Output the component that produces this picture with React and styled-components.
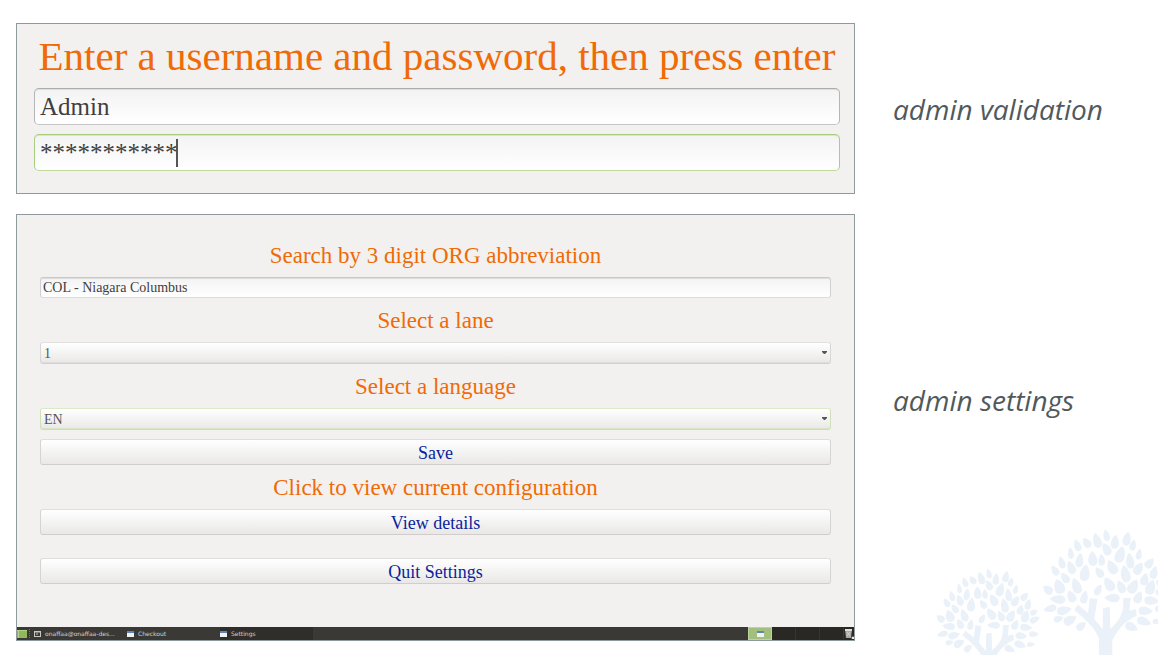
import React from "react";
import styled, { createGlobalStyle, css } from "styled-components";

const GlobalStyle = createGlobalStyle`
  *, *::before, *::after { box-sizing: border-box; }
  body { margin: 0; background: #ffffff; }
`;

const serif = '"Liberation Serif", "Times New Roman", serif';

const Page = styled.main`
  position: relative;
  min-height: 100vh;
  padding: 23px 0 14px 16px;
  display: flex;
  flex-direction: column;
  gap: 20px;
  overflow: hidden;
  font-family: ${serif};
`;

const Example = styled.section`
  display: grid;
  grid-template-columns: minmax(0, 839fr) minmax(0, 265fr);
  column-gap: 38px;
  align-items: center;
`;

const Caption = styled.h2`
  margin: 0;
  padding-bottom: ${(p) => (p.$raised ? 56 : 0)}px;
  position: relative;
  z-index: 1;
  font: italic 400 28px/36px "Open Sans", "Noto Sans", sans-serif;
  color: #50595b;
  white-space: nowrap;
`;

const Panel = styled.form`
  border: 1px solid #8f9a9c;
  background: #f2f1f0;
`;

const LoginBody = styled.div`
  display: flex;
  flex-direction: column;
  gap: 9px;
  padding: 0 14px 22px 17px;
`;

const Title = styled.h1`
  margin: 0 0 -9px;
  font-size: 41px;
  font-weight: 400;
  line-height: 64px;
  text-align: center;
  white-space: nowrap;
  color: #f06a05;
`;

const control = css`
  display: block;
  width: 100%;
  margin: 0;
  border: 1px solid;
  border-radius: 3px;
  outline: none;
  font-family: ${serif};
  color: #3f3f3f;
`;

const TextBox = styled.input`
  ${control}
  height: ${(p) => (p.$large ? 37 : 21)}px;
  padding: ${(p) => (p.$large ? "1px 5px 0" : "0 2px")};
  border-radius: ${(p) => (p.$large ? 5 : 3)}px;
  border-color: ${(p) =>
    p.$active
      ? "#a9cc7c #aace80 #bedb9a"
      : p.$large
        ? "#adadad #b5b5b5 #c6c6c6"
        : "#c9c8c7 #d2d1d0 #dddcdb"};
  box-shadow: inset 0 1px 0 ${(p) => (p.$active ? "#d7e8c2" : "#dededd")};
  background: linear-gradient(#f3f3f3, #ffffff);
  font-size: ${(p) => (p.$large ? 25 : 14)}px;
`;

const Field = styled.div`
  position: relative;
`;

const Caret = styled.span`
  position: absolute;
  top: 5px;
  left: 142px;
  width: 2px;
  height: 28px;
  background: #555555;
`;

const SettingsBody = styled.div`
  padding: 18px 23px 43px;
`;

const Heading = styled.label`
  display: block;
  padding-top: 2px;
  font-size: 23px;
  line-height: 42px;
  text-align: center;
  color: #f06a05;
`;

const Choice = styled.select`
  ${control}
  appearance: none;
  height: 22px;
  padding: 0 20px 0 3px;
  border-color: ${(p) => (p.$active ? "#dbe9c9 #d0e1b9 #cdddb8" : "#e2e1e0 #d8d7d6 #d2d1d0")};
  box-shadow: inset 0 -1px 0 ${(p) => (p.$active ? "#d6e5c2" : "#dddcdb")};
  background: linear-gradient(#ffffff, #e9e8e7);
  font-size: 14px;
  color: #555555;
`;

const Arrow = styled.svg`
  position: absolute;
  right: 4px;
  top: 9px;
  width: 5px;
  height: 4px;
  pointer-events: none;
`;

const Button = styled.button`
  ${control}
  height: 26px;
  margin-top: ${(p) => p.$space || 0}px;
  padding: 1px 0 0;
  border-color: #dfdedd #d5d4d3 #cfcecd;
  background: linear-gradient(#ffffff, #e9e8e7);
  font-size: 18px;
  line-height: 22px;
  text-align: center;
  color: #0b1f9e;
`;

const Taskbar = styled.nav`
  display: flex;
  align-items: stretch;
  height: 13px;
  background: #3b3935;
  font: 6px/12px "DejaVu Sans", sans-serif;
`;

const Launcher = styled.button`
  width: 11px;
  margin: 0;
  padding: 0;
  border: 0;
  background: none;
  svg { display: block; }
`;

const Task = styled.button`
  display: flex;
  align-items: center;
  flex: 0 1 ${(p) => p.$width || 93}px;
  gap: 4px;
  min-width: 0;
  padding: 0;
  border: 0;
  background: ${(p) => (p.$current ? "#2f2e2b" : "transparent")};
  font: inherit;
  color: #d6d3cd;
  white-space: nowrap;
  svg { flex: none; }
`;

const Divider = styled.span`
  width: 3px;
  margin: 2px 2px 2px 1px;
  border-left: 1px dotted #77746e;
`;

const Workspaces = styled.div`
  display: flex;
  margin-left: auto;
`;

const Workspace = styled.button`
  display: grid;
  place-items: center;
  width: 24px;
  padding: 0;
  border: 1px solid ${(p) => (p.$current ? "#bcd49d" : "#292825")};
  border-right-color: ${(p) => (p.$current ? "#bcd49d" : "#383632")};
  background: ${(p) => (p.$current ? "#a3bf7d" : "#292825")};
`;

const Trash = styled.button`
  display: grid;
  place-items: center;
  width: 10px;
  padding: 0;
  border: 0;
  background: #292825;
`;

const Trees = styled.svg`
  position: absolute;
  right: 0;
  bottom: 0;
  width: 230px;
  height: 135px;
  pointer-events: none;
`;

// Each leaf: centre x, centre y, length, width, direction of its tip in degrees.
const leaves = [
  [214, 45, 34, 18, -12], [186, 61, 44, 24, -18], [240, 65, 40, 23, 5],
  [276, 56, 40, 23, 12], [155, 68, 32, 22, -35], [127, 76, 35, 20, -20],
  [294, 75, 32, 18, 15], [214, 87, 38, 24, -28], [256, 103, 48, 28, 18],
  [312, 102, 32, 17, 12], [107, 99, 33, 17, -8], [173, 115, 42, 26, -5],
  [134, 120, 42, 22, 8], [200, 119, 34, 19, -3], [285, 122, 45, 23, -8],
  [80, 127, 36, 20, -15], [344, 129, 34, 23, 40], [231, 141, 44, 28, -28],
  [108, 142, 40, 23, -22], [60, 151, 32, 20, -35], [311, 145, 40, 25, 32],
  [150, 158, 48, 28, 8], [193, 157, 34, 22, -35], [271, 161, 50, 27, -12],
  [90, 173, 34, 22, -35], [329, 177, 36, 24, 15], [357, 157, 38, 22, 15],
  [378, 186, 28, 20, 60], [72, 199, 44, 30, -20], [124, 197, 46, 26, -20],
  [222, 192, 44, 28, -32], [258, 200, 38, 24, -25], [295, 199, 44, 28, 28],
  [347, 201, 44, 28, 18], [381, 213, 38, 22, 65], [38, 209, 32, 24, -50],
  [190, 209, 34, 20, 28], [109, 229, 36, 24, -25], [148, 231, 38, 21, 12],
  [310, 232, 36, 24, 25], [68, 238, 44, 24, -85], [231, 234, 44, 24, -88],
  [350, 242, 42, 24, 95], [45, 266, 38, 20, -105], [88, 271, 42, 24, 75],
  [332, 273, 40, 24, 95], [378, 266, 34, 20, 90], [71, 297, 28, 18, 75],
  [106, 300, 40, 26, 60], [139, 318, 32, 22, 50], [290, 321, 38, 24, 115],
  [328, 305, 42, 24, 110], [367, 304, 28, 16, 85],
];

function Tree(props) {
  return (
    <g {...props}>
      {leaves.map(([x, y, l, w, a]) => (
        <path
          key={`${x}-${y}`}
          transform={`translate(${x} ${y}) rotate(${a}) scale(${w / 19} ${l / 38})`}
          d="M0-20C5-15 10-4 10 6C10 15 6 20 0 20S-10 15-10 6C-10-4-5-15 0-20Z"
        />
      ))}
      <path d="M192 420V357Q182 322 118 270L129 254L159 279L165 234L187 237L178 297L203 328L204 265L224 261L226 326Q258 300 264 266L265 234H287L283 272L303 267L305 288Q262 303 232 360V420Z" />
    </g>
  );
}

function WindowIcon() {
  return (
    <svg width="7" height="7" viewBox="0 0 7 7" aria-hidden="true">
      <rect y="1" width="7" height="6" fill="#f1f1ee" />
      <rect y="1" width="7" height="2" fill="#5b86bd" />
    </svg>
  );
}

function DownArrow() {
  return (
    <Arrow viewBox="0 0 5 4" aria-hidden="true">
      <path d="M0 0H5V1L3 3H2L0 1Z" fill="#555555" />
    </Arrow>
  );
}

export default function App() {
  const stop = (e) => e.preventDefault();
  return (
    <>
      <GlobalStyle />
      <Page>
        <Trees viewBox="0 0 690 405" fill="#eaf1f8" aria-hidden="true">
          <Tree transform="translate(321 0)" />
          <Tree transform="translate(6 124) scale(0.825 0.82)" />
        </Trees>

        <Example>
          <Panel onSubmit={stop}>
            <LoginBody>
              <Title>Enter a username and password, then press enter</Title>
              <TextBox $large aria-label="Username" defaultValue="Admin" />
              <Field>
                <TextBox $large $active aria-label="Password" defaultValue="***********" />
                <Caret />
              </Field>
            </LoginBody>
          </Panel>
          <Caption>admin validation</Caption>
        </Example>

        <Example>
          <Panel onSubmit={stop}>
            <SettingsBody>
              <Heading htmlFor="org">Search by 3 digit ORG abbreviation</Heading>
              <TextBox id="org" defaultValue="COL - Niagara Columbus" />
              <Heading htmlFor="lane">Select a lane</Heading>
              <Field>
                <Choice id="lane">
                  <option>1</option>
                </Choice>
                <DownArrow />
              </Field>
              <Heading htmlFor="language">Select a language</Heading>
              <Field>
                <Choice id="language" $active>
                  <option>EN</option>
                </Choice>
                <DownArrow />
              </Field>
              <Button type="submit" $space={9}>Save</Button>
              <Heading htmlFor="details">Click to view current configuration</Heading>
              <Button type="button" id="details">View details</Button>
              <Button type="button" $space={23}>Quit Settings</Button>
            </SettingsBody>
            <Taskbar>
              <Launcher type="button" aria-label="Show desktop">
                <svg width="10" height="13" viewBox="0 0 10 13">
                  <rect y="3" width="10" height="8" fill="#8fb95c" />
                  <path d="M0 3H10V4H0ZM1 4H2V11H1Z" fill="#b4d28c" />
                </svg>
              </Launcher>
              <Divider />
              <Task type="button" $width={93}>
                <svg width="7" height="7" viewBox="0 0 7 7" aria-hidden="true">
                  <rect x="0.5" y="1.5" width="6" height="5" fill="#3a3a38" stroke="#c9c7c2" />
                  <path d="M1 2H6M2 4H4" stroke="#c9c7c2" />
                </svg>
                onaffaa@onaffaa-des...
              </Task>
              <Task type="button"><WindowIcon />Checkout</Task>
              <Task type="button" $current><WindowIcon />Settings</Task>
              <Workspaces>
                <Workspace type="button" $current aria-label="Workspace 1"><WindowIcon /></Workspace>
                <Workspace type="button" aria-label="Workspace 2" />
                <Workspace type="button" aria-label="Workspace 3" />
                <Workspace type="button" aria-label="Workspace 4" />
              </Workspaces>
              <Trash type="button" aria-label="Trash">
                <svg width="10" height="11" viewBox="0 0 10 11">
                  <path d="M1 1H8L7 10H2Z" fill="#a9a9a7" />
                  <path d="M1 1H8V3H1Z" fill="#dededc" />
                  <path d="M3 4L6 8M6 4L3 8M8 9H10V11H8Z" stroke="#e8e8e6" fill="#e8e8e6" strokeWidth="0.6" />
                </svg>
              </Trash>
            </Taskbar>
          </Panel>
          <Caption $raised>admin settings</Caption>
        </Example>
      </Page>
    </>
  );
}
